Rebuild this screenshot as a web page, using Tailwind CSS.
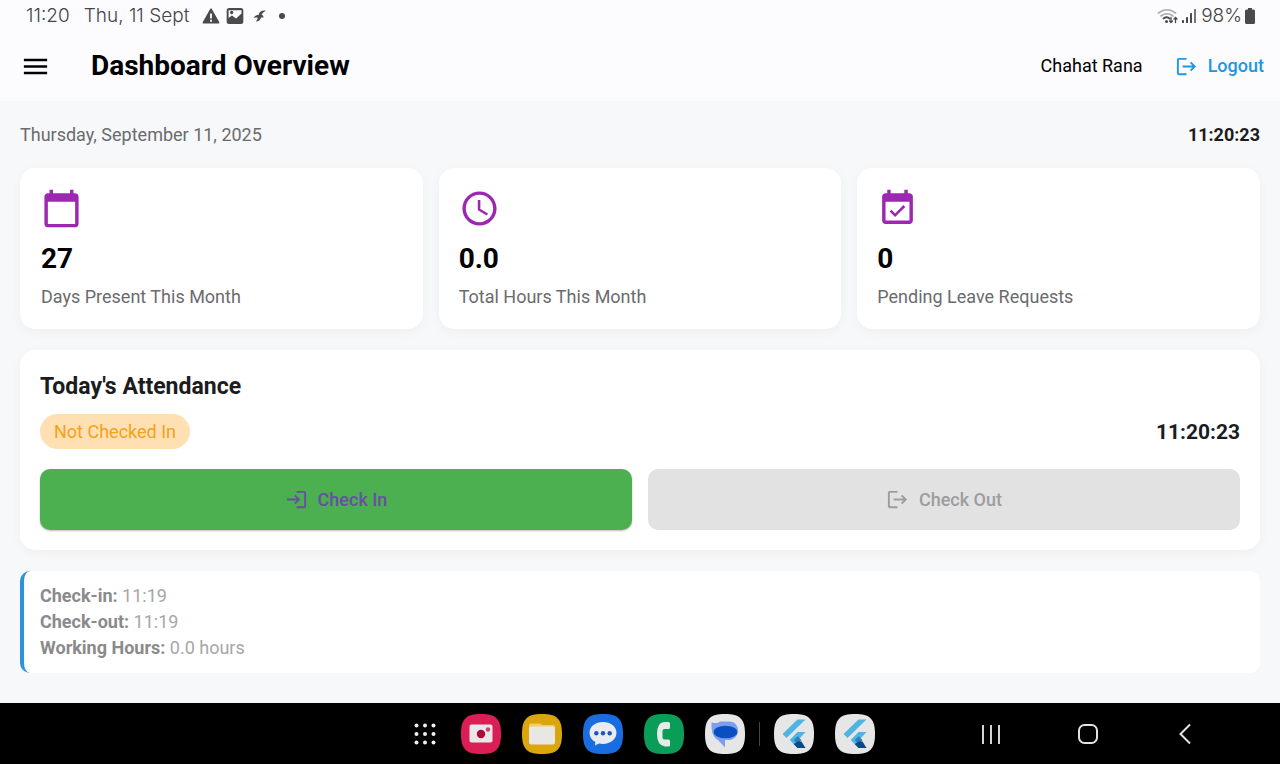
<!DOCTYPE html>
<html lang="en">
<head>
<meta charset="utf-8">
<meta name="viewport" content="width=device-width, initial-scale=1">
<title>Dashboard Overview</title>
<script src="https://cdn.jsdelivr.net/npm/@tailwindcss/browser@4"></script>
</head>
<body class="flex min-h-screen flex-col bg-[#f6f8fa] font-[Roboto,sans-serif] text-lg leading-6 text-[#1c1c1e]">

<div class="bg-[#fcfbfe]">
  <!-- Status bar -->
  <div class="flex h-[31px] items-center justify-between pr-6 pl-[26px] font-[Inter,sans-serif] text-[19px] leading-[31px] font-light text-[#444447]">
    <div class="flex items-center">
      <span>11:20</span>
      <span class="ml-[14px]">Thu, 11 Sept</span>
      <svg class="ml-3 size-5 fill-[#4a4a4d]" viewBox="0 0 24 24" aria-hidden="true"><path fill-rule="evenodd" d="M11 3.500Q12 2 13 3.500L22 19.500Q22.500 21 21 21H3Q1.500 21 2 19.500ZM10.900 9v6h2.200V9zM10.900 16.500v2.300h2.200v-2.300z"/></svg>
      <svg class="ml-1 size-5 fill-[#4a4a4d]" viewBox="0 0 24 24" aria-hidden="true"><path fill-rule="evenodd" d="M5 2.500h14a3 3 0 0 1 3 3v13a3 3 0 0 1-3 3H5a3 3 0 0 1-3-3v-13a3 3 0 0 1 3-3zM4.300 14.500l4-3 5 3.500 6.500-6V5H4.300zM8 5.800a2 2 0 1 1 0 4 2 2 0 0 1 0-4z"/></svg>
      <svg class="ml-2 size-[14px] fill-[#4a4a4d]" viewBox="0 0 24 24" aria-hidden="true"><path d="M22 3c-6-1-11 1-12 7C6 10 3 12 1 15.500c3-1 5-1 7-.5-.2 2.500-1.200 4-3 6.500 5 0 8-3 8.800-7l4.200.1c0-2.500-1-4-3.400-4.600C15.500 7 18 5.500 22 3z"/></svg>
      <span class="ml-3 size-[6px] rounded-full bg-[#4a4a4d]"></span>
    </div>
    <div class="flex items-center">
      <svg class="h-5 w-[22px]" viewBox="0 0 22 20" fill="none" stroke-linecap="round" aria-hidden="true">
        <g stroke="#aaaaae" stroke-width="1.600"><path d="M1.500 7Q10 .5 18.500 7M4 10q6-4.500 12 0"/></g>
        <path d="M6.500 12.500q3.500-2.500 6 0" stroke="#4a4a4d" stroke-width="1.800"/>
        <circle cx="9.500" cy="15.500" r="1.500" fill="#4a4a4d"/>
        <path d="M14 11.500v5m-1.500-1.500 1.500 1.600 1.500-1.600M18.500 16.500v-5M17 13l1.500-1.600L20 13" stroke="#4a4a4d" stroke-width="1.300"/>
      </svg>
      <svg class="ml-[2px] h-5 w-4" viewBox="0 0 16 20" fill="#4a4a4d" aria-hidden="true"><rect x="1" y="14" width="2" height="3" rx=".5"/><rect x="5" y="11" width="2" height="6" rx=".5"/><rect x="9" y="7" width="2" height="10" rx=".5"/><rect x="13" y="3" width="2" height="14" rx=".5" fill="#77777a"/></svg>
      <span class="ml-1">98%</span>
      <svg class="ml-[2px] h-[18px] w-3 fill-[#4a4a4d]" viewBox="0 0 12 18" aria-hidden="true"><path d="M4 1h4v1.500h1.500A1.500 1.500 0 0 1 11 4v11.500A1.500 1.500 0 0 1 9.500 17h-7A1.500 1.500 0 0 1 1 15.500V4a1.500 1.500 0 0 1 1.500-1.500H4z"/></svg>
    </div>
  </div>

  <!-- App bar -->
  <header class="flex h-[70px] items-center justify-between pr-4 pl-5">
    <div class="flex items-center">
      <button type="button" aria-label="Open menu">
        <svg class="size-[31px] fill-black" viewBox="0 0 24 24" aria-hidden="true"><path d="M3 18h18v-2H3v2zm0-5h18v-2H3v2zm0-7v2h18V6H3z"/></svg>
      </button>
      <h1 class="ml-10 text-[28px] leading-9 font-bold text-black">Dashboard Overview</h1>
    </div>
    <div class="flex items-center gap-8">
      <span class="text-black">Chahat Rana</span>
      <button type="button" class="flex items-center gap-[10px] font-medium text-[#2196e3]">
        <svg class="size-[23px] fill-current" viewBox="0 0 24 24" aria-hidden="true"><path d="M17 7l-1.410 1.410L18.170 11H8v2h10.170l-2.580 2.580L17 17l5-5-5-5zM4 5h8V3H4c-1.100 0-2 .9-2 2v14c0 1.100.9 2 2 2h8v-2H4V5z"/></svg>
        Logout
      </button>
    </div>
  </header>
</div>

<main class="grow px-5 pt-[22px] pb-[30px]">
  <div class="flex items-center justify-between">
    <span class="text-[#6b6b6e]">Thursday, September 11, 2025</span>
    <time class="font-bold">11:20:23</time>
  </div>

  <section class="mt-[21px] grid grid-cols-3 gap-4" aria-label="Summary">
    <article class="rounded-[15px] bg-white px-[21px] pt-5 pb-5 shadow-[0_3px_12px_rgba(0,0,0,0.04)]">
      <svg class="size-[41px] fill-[#9c27b0]" viewBox="0 0 24 24" aria-hidden="true"><path d="M20 3h-1V1h-2v2H7V1H5v2H4c-1.100 0-2 .9-2 2v16c0 1.100.9 2 2 2h16c1.100 0 2-.9 2-2V5c0-1.100-.9-2-2-2zm0 18H4V8h16v13z"/></svg>
      <p class="mt-3 text-[28px] leading-9 font-bold text-black">27</p>
      <p class="mt-2 text-[#6b6b6e]">Days Present This Month</p>
    </article>
    <article class="rounded-[15px] bg-white px-5 pt-5 pb-5 shadow-[0_3px_12px_rgba(0,0,0,0.04)]">
      <svg class="size-[41px] fill-[#9c27b0]" viewBox="0 0 24 24" aria-hidden="true"><path d="M11.990 2C6.470 2 2 6.480 2 12s4.470 10 9.990 10C17.520 22 22 17.520 22 12S17.520 2 11.990 2zM12 20c-4.420 0-8-3.580-8-8s3.580-8 8-8 8 3.580 8 8-3.580 8-8 8zm.5-13H11v6l5.250 3.150.75-1.230-4.500-2.670z"/></svg>
      <p class="mt-3 text-[28px] leading-9 font-bold text-black">0.0</p>
      <p class="mt-2 text-[#6b6b6e]">Total Hours This Month</p>
    </article>
    <article class="rounded-[15px] bg-white px-5 pt-5 pb-5 shadow-[0_3px_12px_rgba(0,0,0,0.04)]">
      <svg class="size-[41px] fill-[#9c27b0]" viewBox="0 0 24 24" aria-hidden="true"><path d="M16.530 11.060L15.470 10l-4.880 4.880-2.120-2.120-1.060 1.060L10.590 17l5.940-5.940zM19 3h-1V1h-2v2H8V1H6v2H5c-1.110 0-1.990.9-1.990 2L3 19c0 1.100.89 2 2 2h14c1.100 0 2-.9 2-2V5c0-1.100-.9-2-2-2zm0 16H5V8h14v11z"/></svg>
      <p class="mt-3 text-[28px] leading-9 font-bold text-black">0</p>
      <p class="mt-2 text-[#6b6b6e]">Pending Leave Requests</p>
    </article>
  </section>

  <section class="mt-[21px] rounded-[15px] bg-white p-5 shadow-[0_3px_12px_rgba(0,0,0,0.04)]">
    <h2 class="text-[23px] leading-[34px] font-bold">Today's Attendance</h2>
    <div class="mt-[10px] flex items-center justify-between">
      <span class="rounded-full bg-[#ffe0b2] px-[14px] py-[5px] text-[#f5a11c] leading-[25px]">Not Checked In</span>
      <time class="text-[21px] font-bold">11:20:23</time>
    </div>
    <div class="mt-5 grid grid-cols-2 gap-4">
      <button type="button" class="flex h-[61px] items-center justify-center gap-[10px] rounded-[10px] bg-[#4caf50] font-medium text-[#6750a4] shadow-[0_1px_2px_rgba(0,0,0,0.25)]">
        <svg class="size-[23px] fill-current" viewBox="0 0 24 24" aria-hidden="true"><path d="M11 7L9.600 8.400l2.600 2.600H2v2h10.200l-2.600 2.600L11 17l5-5-5-5zm9 12h-8v2h8c1.100 0 2-.9 2-2V5c0-1.100-.9-2-2-2h-8v2h8v14z"/></svg>
        Check In
      </button>
      <button type="button" disabled class="flex h-[61px] items-center justify-center gap-[10px] rounded-[10px] bg-[#e2e2e2] font-medium text-[#9d9d9f]">
        <svg class="size-[23px] fill-current" viewBox="0 0 24 24" aria-hidden="true"><path d="M17 7l-1.410 1.410L18.170 11H8v2h10.170l-2.580 2.580L17 17l5-5-5-5zM4 5h8V3H4c-1.100 0-2 .9-2 2v14c0 1.100.9 2 2 2h8v-2H4V5z"/></svg>
        Check Out
      </button>
    </div>
  </section>

  <section class="mt-[21px] rounded-[10px] border-l-4 border-[#2c92dc] bg-white px-4 py-3 leading-[26px] text-[#a6a6a8]">
    <p><b class="text-[#8a8a8c]">Check-in:</b> 11:19</p>
    <p><b class="text-[#8a8a8c]">Check-out:</b> 11:19</p>
    <p><b class="text-[#8a8a8c]">Working Hours:</b> 0.0 hours</p>
  </section>
</main>

<!-- Task bar -->
<nav class="grid h-[61px] shrink-0 grid-cols-[1fr_auto_1fr] items-center bg-black" aria-label="System">
  <span></span>
  <div class="flex items-center gap-[21px] pl-2">
    <button type="button" aria-label="All apps" class="mr-[3px] flex w-6 justify-center">
      <svg class="size-6" viewBox="0 0 24 24" fill="#f2f2f2" aria-hidden="true"><circle cx="3.500" cy="3.500" r="2"/><circle cx="12" cy="3.500" r="2"/><circle cx="20.500" cy="3.500" r="2"/><circle cx="3.500" cy="12" r="2"/><circle cx="12" cy="12" r="2"/><circle cx="20.500" cy="12" r="2"/><circle cx="3.500" cy="20.500" r="2"/><circle cx="12" cy="20.500" r="2"/><circle cx="20.500" cy="20.500" r="2"/></svg>
    </button>
    <button type="button" aria-label="Screen recorder">
      <svg class="size-10" viewBox="0 0 40 40" aria-hidden="true"><path fill="#db1f56" d="M20 0C35 0 40 5 40 20S35 40 20 40 0 35 0 20 5 0 20 0z"/><rect x="8.500" y="10.500" width="23" height="18" rx="2" fill="#ebe7e8"/><circle cx="20" cy="20" r="4.200" fill="#ac0b35"/><circle cx="27" cy="15.500" r="2.200" fill="#c9446c"/></svg>
    </button>
    <button type="button" aria-label="Files">
      <svg class="size-10" viewBox="0 0 40 40" aria-hidden="true"><path fill="#dba50d" d="M20 0C35 0 40 5 40 20S35 40 20 40 0 35 0 20 5 0 20 0z"/><path fill="#efce69" d="M7 11.500a2 2 0 0 1 2-2h9l2 1.500h11a2 2 0 0 1 2 2v2H7z"/><rect x="7" y="12.500" width="26" height="18" rx="2" fill="#e9e7e3"/></svg>
    </button>
    <button type="button" aria-label="Messages">
      <svg class="size-10" viewBox="0 0 40 40" aria-hidden="true"><path fill="#1a6de0" d="M20 0C35 0 40 5 40 20S35 40 20 40 0 35 0 20 5 0 20 0z"/><path fill="#e8ebf0" d="M20 8c7.500 0 13.500 4.500 13.500 10.800S27.500 30 20 30q-2 0-4-.4L12 31.500l.3-3.500C8.500 26 6.500 22.500 6.500 18.800 6.500 12.500 12.500 8 20 8z"/><g fill="#2156b5"><circle cx="13.300" cy="19.300" r="2.200"/><circle cx="20" cy="19.300" r="2.200"/><circle cx="26.700" cy="19.300" r="2.200"/></g></svg>
    </button>
    <button type="button" aria-label="Phone">
      <svg class="size-10" viewBox="0 0 40 40" aria-hidden="true"><path fill="#0a9d58" d="M20 0C35 0 40 5 40 20S35 40 20 40 0 35 0 20 5 0 20 0z"/><path fill="#e5ebe8" d="M20 8h4.500a1.500 1.500 0 0 1 1.500 1.500v4a1.500 1.500 0 0 1-1.500 1.500H20.500q-2 0-2 2v6.500q0 2 2 2h4a1.500 1.500 0 0 1 1.500 1.500v4a1.500 1.500 0 0 1-1.500 1.500H21q-8-1-8-12.500T20 8z"/></svg>
    </button>
    <div class="flex items-center gap-[14px]">
      <button type="button" aria-label="Chat">
        <svg class="size-10" viewBox="0 0 40 40" aria-hidden="true"><path fill="#e6e6e7" d="M20 0C35 0 40 5 40 20S35 40 20 40 0 35 0 20 5 0 20 0z"/><path fill="#7b9ff0" d="M6.500 8.500Q13 10 15 7.500h9.500c5 0 8.500 4 8.500 9s-3.500 9-8.500 9.500H20v7.500L13 26C8.500 24 6 18 6.500 8.500z"/><ellipse cx="20.500" cy="18" rx="11.800" ry="6.300" fill="#0b4ec1"/></svg>
      </button>
      <span class="h-6 w-px bg-[#444]"></span>
      <button type="button" aria-label="Flutter app 1">
        <svg class="size-10" viewBox="0 0 40 40" aria-hidden="true"><path fill="#e6e6e7" d="M20 0C35 0 40 5 40 20S35 40 20 40 0 35 0 20 5 0 20 0z"/><path fill="#4fb4e2" d="M23.500 5.500h8L12.500 24l-4-4zM23.500 18h8l-7.300 8 7.300 8h-8l-7.800-8z"/><path fill="#2b82bf" d="M19.700 26l4-3.800 3.800 4-3.800 3.700z"/><path fill="#0c4a86" d="M19.700 30l4-2.500h3.800l4 6.500h-8z"/></svg>
      </button>
    </div>
    <button type="button" aria-label="Flutter app 2">
      <svg class="size-10" viewBox="0 0 40 40" aria-hidden="true"><path fill="#e6e6e7" d="M20 0C35 0 40 5 40 20S35 40 20 40 0 35 0 20 5 0 20 0z"/><path fill="#4fb4e2" d="M23.500 5.500h8L12.500 24l-4-4zM23.500 18h8l-7.300 8 7.300 8h-8l-7.800-8z"/><path fill="#2b82bf" d="M19.700 26l4-3.800 3.800 4-3.800 3.700z"/><path fill="#0c4a86" d="M19.700 30l4-2.500h3.800l4 6.500h-8z"/></svg>
    </button>
  </div>
  <div class="flex items-center justify-end gap-[73px] pr-[83px]">
    <button type="button" aria-label="Recent apps"><svg class="size-6" viewBox="0 0 24 24" fill="#d4d4d4" aria-hidden="true"><path d="M3 3h2v19H3zM11 3h2v19h-2zM19 3h2v19h-2z"/></svg></button>
    <button type="button" aria-label="Home"><svg class="size-6" viewBox="0 0 24 24" fill="none" stroke="#e2e2e2" stroke-width="2" aria-hidden="true"><rect x="3" y="3" width="18" height="18" rx="5.500"/></svg></button>
    <button type="button" aria-label="Back"><svg class="size-6" viewBox="0 0 24 24" fill="none" stroke="#e2e2e2" stroke-width="2" aria-hidden="true"><path d="M17 2.500L7.500 12l9.500 9.500"/></svg></button>
  </div>
</nav>
</body>
</html>
